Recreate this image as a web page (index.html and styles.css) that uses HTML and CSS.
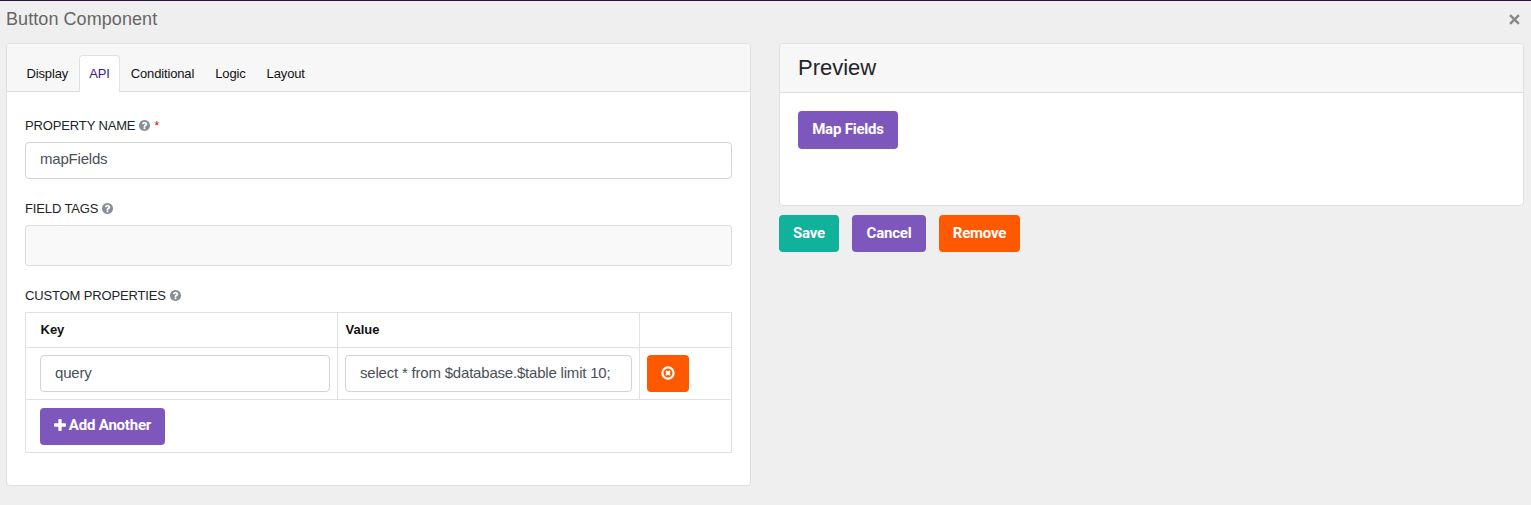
FILE: index.html
```html
<!DOCTYPE html>
<html lang="en">
<head>
<meta charset="utf-8">
<title>Button Component</title>
<link rel="stylesheet" href="styles.css">
</head>
<body>
<svg class="sprite" aria-hidden="true">
  <symbol id="help" viewBox="128 128 1536 1536"><path d="M1024 1376v-192q0-14-9-23t-23-9h-192q-14 0-23 9t-9 23v192q0 14 9 23t23 9h192q14 0 23-9t9-23zm256-672q0-88-55.500-163t-138.500-116-170-41q-243 0-371 213-15 24 8 42l132 100q7 6 19 6 16 0 25-12 53-68 86-92 34-24 86-24 48 0 85.500 26t37.500 59q0 38-20 61t-68 45q-63 28-115.500 86.500t-52.500 125.500v36q0 14 9 23t23 9h192q14 0 23-9t9-23q0-19 21.500-49.500t54.500-49.500q32-18 49-28.500t46-35 44.500-48 28-60.500 12.500-81zm384 192q0 209-103 385.500t-279.500 279.500-385.500 103-385.500-103-279.500-279.500-103-385.500 103-385.500 279.500-279.500 385.500-103 385.500 103 279.500 279.500 103 385.500z"/></symbol>
</svg>
<header class="dialog-head">
  <h1 class="title">Button Component</h1>
  <svg class="close" viewBox="0 0 10 10"><path d="M1 1L9 9M9 1L1 9"/></svg>
</header>
<main class="columns">
  <section class="card settings">
    <nav class="tabs">
      <a class="tab">Display</a>
      <a class="tab active">API</a>
      <a class="tab">Conditional</a>
      <a class="tab">Logic</a>
      <a class="tab">Layout</a>
    </nav>
    <div class="settings-body">
      <label class="label">PROPERTY NAME <svg class="help"><use href="#help"/></svg> <span class="required">*</span></label>
      <div class="input name">mapFields</div>
      <label class="label tags-label">FIELD TAGS <svg class="help"><use href="#help"/></svg></label>
      <div class="tags"></div>
      <label class="label custom-label">CUSTOM PROPERTIES <svg class="help"><use href="#help"/></svg></label>
      <div class="grid">
        <div class="cell th first">Key</div>
        <div class="cell th">Value</div>
        <div class="cell th"></div>
        <div class="cell first"><div class="input">query</div></div>
        <div class="cell"><div class="input">select * from $database.$table limit 10;</div></div>
        <div class="cell"><button class="btn danger icon-btn"><svg class="remove" viewBox="0 0 14 14"><circle cx="7" cy="7" r="5.600"/><path d="M5 5L9 9M9 5L5 9"/></svg></button></div>
        <div class="cell first wide"><button class="btn primary"><svg class="plus" viewBox="192 256 1408 1408"><path d="M1600 864v192q0 40-28 68t-68 28h-416v416q0 40-28 68t-68 28h-192q-40 0-68-28t-28-68v-416h-416q-40 0-68-28t-28-68v-192q0-40 28-68t68-28h416v-416q0-40 28-68t68-28h192q40 0 68 28t28 68v416h416q40 0 68 28t28 68z"/></svg>Add Another</button></div>
      </div>
    </div>
  </section>
  <section class="side">
    <div class="card preview">
      <h2 class="preview-head">Preview</h2>
      <div class="preview-body"><button class="btn primary map">Map Fields</button></div>
    </div>
    <div class="actions">
      <button class="btn success save">Save</button>
      <button class="btn primary cancel">Cancel</button>
      <button class="btn danger delete">Remove</button>
    </div>
  </section>
</main>
</body>
</html>
```

FILE: styles.css
```css
* { box-sizing: border-box; }
body {
  margin: 0;
  height: 505px;
  overflow: hidden;
  background: #efefef;
  border-top: 1px solid #2c133f;
  color: #212529;
  font-family: "Liberation Sans", Arial, sans-serif;
  font-size: 13px;
}
.sprite { display: none; }
.dialog-head {
  display: flex;
  justify-content: space-between;
  align-items: center;
  height: 42px;
  padding: 0 11px 6px 6px;
}
.title { margin: 0; font-size: 18px; font-weight: 400; letter-spacing: 0.07px; color: #666; }
.close { width: 11px; height: 11px; stroke: #888; stroke-width: 2.2; }
.columns {
  display: grid;
  grid-template-columns: 745px 745px;
  column-gap: 28px;
  align-items: start;
  padding-left: 6px;
}
.card { background: #fff; border: 1px solid #dfdfdf; border-radius: 4px; }
.settings { height: 443px; }
.tabs {
  display: flex;
  align-items: flex-end;
  height: 48px;
  padding: 0 9px;
  background: #f7f7f7;
  border-bottom: 1px solid #dcdcdc;
  border-radius: 3px 3px 0 0;
}
.tab {
  height: 37px;
  margin-bottom: -1px;
  padding: 0 9.500px;
  border: 1px solid transparent;
  border-bottom: 0;
  border-radius: 4px 4px 0 0;
  line-height: 36px;
  letter-spacing: -0.14px;
  color: #111;
}
.tab.active { background: #fff; border-color: #dee2e6; padding: 0 9.500px; color: #40217f; }
.settings-body { padding: 25px 18px; }
.label { display: flex; align-items: center; height: 17px; margin-bottom: 8px; gap: 4px; letter-spacing: -0.14px; white-space: nowrap; }
.help { width: 11px; height: 11px; fill: #868e96; }
.required { font-size: 12px; color: #eb0000; }
.input {
  height: 37px;
  padding: 0 14px;
  border: 1px solid #ced4da;
  border-radius: 4px;
  background: #fff;
  color: #495057;
  font-size: 15px;
  letter-spacing: -0.2px;
  line-height: 34px;
  white-space: nowrap;
}
.input.name { line-height: 32px; }
.tags-label { margin-top: 21px; }
.tags { height: 41px; border: 1px solid #ddd; border-radius: 3px; background: #f9f9f9; }
.custom-label { margin-top: 21px; }
.grid {
  display: grid;
  grid-template-columns: 312px 302px 92px;
  grid-template-rows: 35px 52px 53px;
  width: 707px;
  border-top: 1px solid #dee2e6;
  border-left: 1px solid #dee2e6;
}
.cell { padding: 7px; border-right: 1px solid #dee2e6; border-bottom: 1px solid #dee2e6; }
.cell.first { padding-left: 14px; }
.th { padding-top: 9px; font-weight: 700; text-indent: 0.5px; color: #111; }
.wide { grid-column: 1 / -1; padding-top: 8px; }
.btn {
  display: inline-flex;
  align-items: center;
  justify-content: center;
  height: 37px;
  padding: 0 0 2px;
  border: 0;
  border-radius: 4px;
  color: #fff;
  font-family: Roboto, sans-serif;
  font-size: 15px;
  font-weight: 700;
  letter-spacing: -0.2px;
}
.primary { background: #7e57bd; }
.success { background: #10b29c; }
.danger { background: #ff5900; }
.wide .btn { width: 125px; padding-bottom: 4px; gap: 3px; }
.plus { width: 12px; height: 12px; fill: #fff; }
.icon-btn { width: 42px; }
.remove { width: 14px; height: 14px; fill: none; stroke: #fff; stroke-width: 2.2; }
.preview { height: 163px; }
.preview-head {
  height: 49px;
  margin: 0;
  padding-left: 18px;
  background: #f7f7f7;
  border-bottom: 1px solid #dcdcdc;
  border-radius: 3px 3px 0 0;
  font-size: 22px;
  font-weight: 400;
  line-height: 47px;
}
.preview-body { padding: 18px; }
.map { width: 100px; height: 38px; }
.actions { display: flex; gap: 13px; margin-top: 9px; }
.save { width: 60px; }
.cancel { width: 74px; }
.delete { width: 81px; }
```
